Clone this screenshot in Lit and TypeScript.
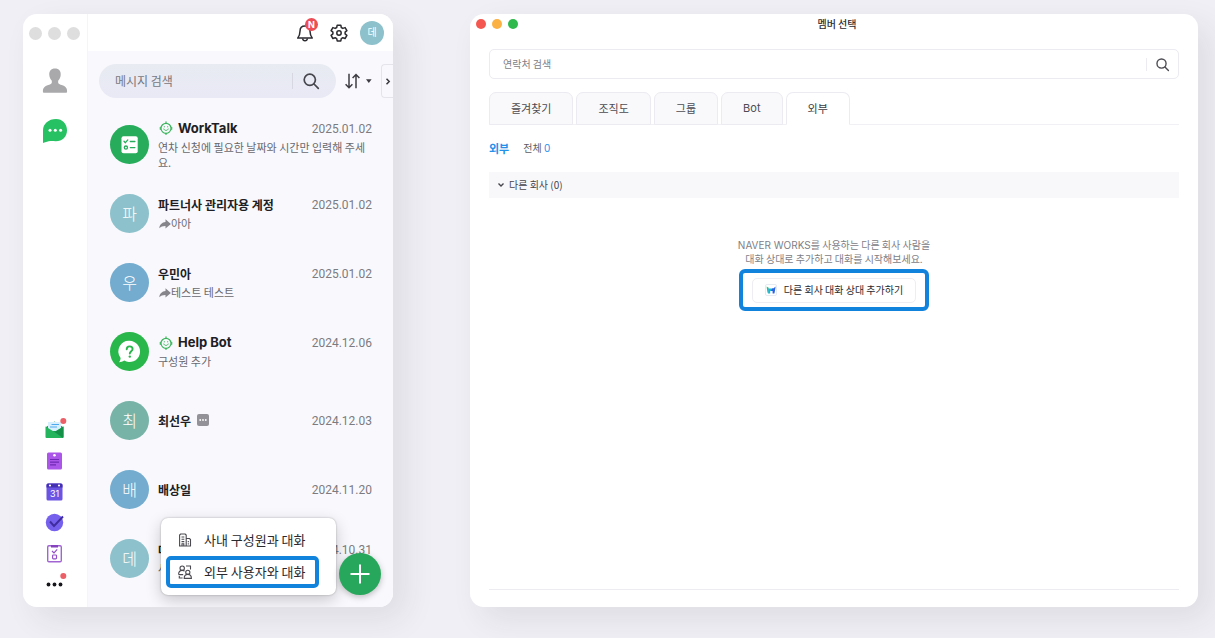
import { LitElement, html, css, svg, nothing } from "lit";
import { customElement, property } from "lit/decorators.js";
import { classMap } from "lit/directives/class-map.js";

const searchIcon = html`<svg viewBox="0 0 16 16" fill="none" stroke="currentColor" stroke-width="1.7" stroke-linecap="round" aria-hidden="true">
  <circle cx="6.8" cy="6.8" r="5.6" /><path d="M11 11 15.300 15.300" />
</svg>`;

const botIcon = html`<svg class="bot" viewBox="0 0 14 14" fill="none" stroke="#3bb55c" stroke-width="1.2" stroke-linecap="round" aria-hidden="true">
  <circle cx="7" cy="7.300" r="5" />
  <path d="M7 2.300V.8M1.300 6.300v2M12.700 6.300v2M7 12.300v1.200" />
  <path d="M4.800 8c.5 2 3.900 2 4.400 0M5.200 5.800h.3M8.500 5.800h.3" stroke-width="1" />
</svg>`;

const forwardIcon = html`<svg class="forward" viewBox="0 0 12 10" fill="#85858b" aria-hidden="true">
  <path d="M6.500.3 11.900 4.900 6.500 9.500V6.900C4 6.800 2 7.500.3 9.300.6 5.600 3 3.100 6.500 2.900Z" />
</svg>`;

const moreTag = html`<svg class="tag" viewBox="0 0 12 12" aria-hidden="true">
  <rect width="12" height="12" rx="2" fill="#929298" />
  <g fill="#fff"><circle cx="3.200" cy="6" r=".9" /><circle cx="6" cy="6" r=".9" /><circle cx="8.800" cy="6" r=".9" /></g>
</svg>`;

const checklistArt = svg`
  <rect x="11.500" y="11.200" width="16.200" height="17" rx="2" fill="#fff" />
  <g fill="none" stroke="#26ac5b" stroke-width="1.300" stroke-linecap="round" stroke-linejoin="round">
    <path d="M14 16.300l1.400 1.400 2.400-2.800M20.300 16.500h4.600M20.300 22.600h4.600" /><circle cx="15.900" cy="22.600" r="1.600" />
  </g>`;

const helpArt = svg`
  <path fill="#fff" d="M19.500 8.800a10.600 10.600 0 1 1-5.300 19.800c-1.600 1-3.300 1.600-5.300 1.600 1-1.200 1.600-2.500 1.700-4.300A10.600 10.600 0 0 1 19.500 8.800Z" />
  <path fill="none" stroke="#29b64a" stroke-width="1.900" stroke-linecap="round" d="M16.700 17.200c0-3.900 5.900-3.600 5.900-.3 0 2.300-2.800 2.300-2.800 4.700" />
  <circle cx="19.800" cy="24.600" r="1.200" fill="#29b64a" />`;

interface Talk {
  name: string;
  date: string;
  text?: string;
  initial?: string;
  tone: string;
  bot?: boolean;
  forwarded?: boolean;
  tagged?: boolean;
  art?: unknown;
}

const talks: Talk[] = [
  { name: "WorkTalk", date: "2025.01.02", text: "연차 신청에 필요한 날짜와 시간만 입력해 주세요.", tone: "green", bot: true, art: checklistArt },
  { name: "파트너사 관리자용 계정", date: "2025.01.02", text: "아아", initial: "파", tone: "aqua", forwarded: true },
  { name: "우민아", date: "2025.01.02", text: "테스트 테스트", initial: "우", tone: "blue", forwarded: true },
  { name: "Help Bot", date: "2024.12.06", text: "구성원 추가", tone: "bright", bot: true, art: helpArt },
  { name: "최선우", date: "2024.12.03", initial: "최", tone: "teal", tagged: true },
  { name: "배상일", date: "2024.11.20", initial: "배", tone: "blue" },
  { name: "데모", date: "2024.10.31", text: "사진", initial: "데", tone: "aqua" },
];

const apps = [
  { label: "메일", icon: svg`
    <path d="M1 7 9.500 1.500 18 7v9.500H1Z" fill="#1a9d50" /><path d="M3 2h13v9H3Z" fill="#d8effd" />
    <path d="M6.500 4.500H14M5 7h7" stroke="#4fa9ee" stroke-width="1.200" />
    <path d="M.5 6.500 9.500 12l9-5.500V17a1 1 0 0 1-1 1h-16a1 1 0 0 1-1-1Z" fill="#24b45d" /><path d="M18.500 6.500 9.500 12l8.500 6 .5-1Z" fill="#159049" />
    <circle cx="18.300" cy="1" r="3" fill="#ec5f67" />` },
  { label: "게시판", icon: svg`
    <rect x="2" y="1.500" width="15" height="17" rx="1.500" fill="#ab56e8" /><circle cx="9.500" cy="4.300" r="1.300" fill="#fff" />
    <path d="M5 8.500h9M5 11.200h9M5 13.900h6" stroke="#7029b4" stroke-width="1.200" />` },
  { label: "캘린더", icon: svg`
    <rect x="1.500" y="1.500" width="16" height="17" rx="1.500" fill="#6b54e3" /><path d="M1.500 3A1.500 1.500 0 0 1 3 1.500h13a1.500 1.500 0 0 1 1.500 1.500V5.500h-16Z" fill="#4430b2" />
    <circle cx="5" cy="3.500" r="1.100" fill="#fff" /><circle cx="14" cy="3.500" r="1.100" fill="#fff" />
    <text x="9.500" y="15" text-anchor="middle" font-size="9" font-family="Inter, sans-serif" fill="#fff">31</text>` },
  { label: "할 일", icon: svg`
    <circle cx="9.500" cy="9.500" r="8.700" fill="#7560ee" /><path d="M5 8.500 9 13l9-9.500" fill="none" stroke="#3f2c9e" stroke-width="1.900" />` },
  { label: "설문", icon: svg`
    <rect x="2.700" y="1.800" width="13.600" height="16" rx="1.200" fill="#fff" stroke="#a164d2" stroke-width="1.400" />
    <path d="M6 1h7v2.600H6Z" fill="#8543be" /><path d="m7 7 2 2 3.200-3.600" fill="none" stroke="#9350c8" stroke-width="1.200" />
    <rect x="7.600" y="11" width="3.900" height="3.900" rx=".8" fill="none" stroke="#9350c8" stroke-width="1.200" />` },
  { label: "더보기", icon: svg`
    <circle cx="3.500" cy="9.500" r="1.900" fill="#17171b" /><circle cx="9.500" cy="9.500" r="1.900" fill="#17171b" /><circle cx="15.500" cy="9.500" r="1.900" fill="#17171b" />
    <circle cx="18.300" cy="1" r="3" fill="#ec5f67" />` },
];

const base = css`
  :host { display: block; font-family: "Noto Sans CJK KR", sans-serif; }
  *, *::before, *::after { box-sizing: border-box; }
  button, input { font: inherit; color: inherit; border: 0; background: none; margin: 0; padding: 0; }
  button, a { cursor: pointer; }
  svg { display: block; overflow: visible; }
  .latin { font-family: Inter, "Noto Sans CJK KR", sans-serif; }
`;

@customElement("talk-row")
class TalkRow extends LitElement {
  @property({ attribute: false }) talk!: Talk;

  static styles = [base, css`
    .row { display: flex; align-items: center; gap: 9px; height: 69px; }
    .avatar { flex: none; display: grid; place-items: center; width: 39px; height: 39px; border-radius: 50%; color: #fff; font-size: 16px; font-weight: 300; line-height: 20px; }
    .letter { padding-bottom: 2px; }
    .avatar svg { width: 39px; height: 39px; }
    .green { background: #26ac5b; }
    .bright { background: #29b64a; }
    .aqua { background: #8dc1cb; }
    .blue { background: #74accf; }
    .teal { background: #78b3a7; }
    .body { flex: 1; min-width: 0; display: grid; gap: 2px; padding-bottom: 1px; }
    .head { display: flex; align-items: center; justify-content: space-between; }
    .name { display: flex; align-items: center; font-size: 12px; font-weight: 700; line-height: 19px; color: #202024; }
    .latin.name { font-size: 13px; }
    .bot { width: 14px; height: 14px; margin: 0 5px 0 1px; }
    .tag { width: 12px; height: 12px; margin-left: 6px; }
    .date { padding-top: 2px; font-family: Roboto, sans-serif; font-size: 12px; line-height: 17px; color: #7b7b81; }
    .text { display: flex; align-items: center; font-size: 11px; line-height: 15px; color: #68686e; word-break: break-all; }
    .forward { flex: none; width: 12px; height: 10px; margin-left: 1px; }
  `];

  render() {
    const t = this.talk;
    return html`<div class="row">
      <span class="avatar ${t.tone} ${t.art ? "" : "letter"}">${t.art ? html`<svg viewBox="0 0 39 39" aria-hidden="true">${t.art}</svg>` : t.initial}</span>
      <div class="body">
        <div class="head">
          <span class=${classMap({ name: true, latin: !!t.bot })}>${t.bot ? botIcon : nothing}${t.name}${t.tagged ? moreTag : nothing}</span>
          <time class="date">${t.date}</time>
        </div>
        ${t.text ? html`<div class="text">${t.forwarded ? forwardIcon : nothing}<span>${t.text}</span></div>` : nothing}
      </div>
    </div>`;
  }
}

@customElement("talk-window")
class TalkWindow extends LitElement {
  static styles = [base, css`
    :host { height: 100%; }
    .window { display: grid; grid-template-columns: 64px 1fr; height: 100%; border-radius: 14px; overflow: hidden; background: #fff; }
    .side { display: flex; flex-direction: column; align-items: center; padding: 13px 1px 13px 0; }
    .lights { display: flex; gap: 6px; }
    .lights span { width: 13px; height: 13px; border-radius: 50%; background: #dededf; }
    .side .main { width: 26px; height: 26px; margin-top: 24px; }
    .side .lights + .main { margin-top: 28px; }
    .apps { display: grid; gap: 12px; margin-top: auto; }
    .apps button, .apps svg { display: block; width: 19px; height: 19px; }
    .pane { position: relative; display: flex; flex-direction: column; background: #f9f9fd; border-left: 1px solid #f5f5f9; }
    .top { display: flex; align-items: center; justify-content: flex-end; gap: 12px; height: 37px; padding: 0 9px 0; background: #fff; }
    .icon { position: relative; display: block; width: 18px; height: 18px; color: #2b2b30; }
    .bell { margin-right: 4px; }
    .badge { position: absolute; top: -6px; right: -4px; width: 13px; height: 13px; border-radius: 50%; background: #ec4d56; color: #fff; font-size: 9px; font-weight: 700; line-height: 13px; text-align: center; }
    .me { display: grid; place-items: center; width: 24px; height: 24px; padding-bottom: 1px; border-radius: 50%; background: #8dc1cb; color: #fff; font-size: 10px; line-height: 14px; }
    .tools { display: flex; align-items: center; gap: 9px; padding: 13px 0 12px 11px; }
    .search { flex: 1; min-width: 0; display: flex; align-items: center; height: 34px; padding: 0 17px 0 16px; border-radius: 17px; background: linear-gradient(#e8ebf2, #e9e9f5); }
    .search input { flex: 1; min-width: 0; height: 20px; padding-bottom: 2px; font-size: 12px; outline: none; }
    .search input::placeholder { color: #77777e; opacity: 1; }
    .search button { border-left: 1px solid #d6d7e0; padding-left: 10px; color: #46464d; }
    .search svg { width: 16px; height: 16px; }
    .sort svg { width: 27px; height: 16px; }
    .fold { display: grid; place-items: center; width: 12px; height: 34px; border: 1px solid #e4e4ea; border-right: 0; border-radius: 4px 0 0 4px; }
    .fold svg { width: 4px; height: 7px; }
    .list { padding: 0 21px 13px 22px; }
    .menu { position: absolute; right: 57px; bottom: 12px; width: 175px; padding: 6px 17px 7px 5px; border-radius: 7px; background: #fff; box-shadow: 0 0 2px rgba(0,0,0,.3), 0 5px 16px rgba(0,0,0,.2); }
    .item { display: flex; align-items: center; gap: 12px; width: 100%; height: 32px; padding: 0 8px; border: 4px solid transparent; border-radius: 5px; color: #29292e; font-size: 13px; line-height: 20px; white-space: nowrap; }
    .item.marked { border-color: #1183dc; }
    .item svg { width: 14px; height: 14px; flex: none; }
    .add { position: absolute; right: 12px; bottom: 12px; display: grid; place-items: center; width: 42px; height: 42px; border-radius: 50%; background: #27a75b; box-shadow: 0 2px 6px rgba(0,0,0,.25); }
    .add svg { width: 20px; height: 20px; }
  `];

  render() {
    return html`<section class="window" aria-label="메시지">
      <nav class="side">
        <div class="lights"><span></span><span></span><span></span></div>
        <button class="main" aria-label="프로필"><svg viewBox="0 0 26 26" fill="#a9a9ac">
          <path d="M13 .6c4 0 6 2.600 5.700 6.300-.2 2.700-1.200 4.200-2.400 5.500-.6 2.800.3 3.500 3.400 4.600 4 1.400 5.300 2.900 5.400 6.300 0 1-.4 1.500-1.400 1.500H2.300c-1 0-1.400-.5-1.400-1.500.1-3.400 1.400-4.900 5.400-6.300 3.100-1.100 4-1.800 3.400-4.600-1.200-1.300-2.200-2.800-2.400-5.500C7 3.200 9 .6 13 .6Z" />
        </svg></button>
        <button class="main" aria-label="대화"><svg viewBox="0 0 26 26">
          <path fill="#25c163" d="M14 1c6.500 0 11 4.900 11 11.200 0 6.500-4.600 11-11.200 11-2 0-3.800-.2-5.500-.1-2.200.2-4.300.9-7.300 2V12.200C1 5.900 6.500 1 14 1Z" />
          <g fill="#fff"><circle cx="8" cy="12.300" r="1.500" /><circle cx="13.300" cy="12.300" r="1.500" /><circle cx="18.600" cy="12.300" r="1.500" /></g>
        </svg></button>
        <div class="apps">${apps.map((a) => html`<button aria-label=${a.label}><svg viewBox="0 0 19 19">${a.icon}</svg></button>`)}</div>
      </nav>
      <div class="pane">
        <header class="top">
          <button class="icon bell" aria-label="알림">
            <svg viewBox="0 0 18 18" fill="none" stroke="currentColor" stroke-width="1.500" stroke-linejoin="round">
              <path d="M9 2C5.800 2 4 4.200 4 7.200c0 3.300-.7 4.800-2.300 6.900h14.600C14.700 12 14 10.500 14 7.200 14 4.200 12.200 2 9 2Z" /><path d="M6.600 14.500c.4 3 4.400 3 4.800 0" />
            </svg><span class="badge latin">N</span>
          </button>
          <button class="icon" aria-label="설정">
            <svg viewBox="0 0 18 18" fill="none" stroke="currentColor" stroke-width="1.500" stroke-linejoin="round">
              <path d="M7.200 1.200h3.600l.5 2.300 1.500.9 2.300-.8 1.800 3.100-1.800 1.500v1.700l1.800 1.500-1.800 3.100-2.300-.8-1.500.9-.5 2.300H7.200l-.5-2.300-1.500-.9-2.300.8-1.800-3.100 1.800-1.500V8.200L1.100 6.700l1.800-3.100 2.300.8 1.500-.9Z" /><circle cx="9" cy="9" r="2.200" />
            </svg>
          </button>
          <button class="me" aria-label="내 계정">데</button>
        </header>
        <div class="tools">
          <div class="search"><input type="text" placeholder="메시지 검색" aria-label="메시지 검색" /><button aria-label="검색">${searchIcon}</button></div>
          <button class="sort" aria-label="정렬"><svg viewBox="0 0 27 16" fill="none" stroke="#3c3c42" stroke-width="1.500">
            <path d="M4 .8v13.700M.6 11.200 4 14.700l3.400-3.500M11 15.300V1.500M7.600 5 11 1.500 14.400 5" /><path d="M21 6.300h5.600L23.800 10Z" fill="#3c3c42" stroke="none" />
          </svg></button>
          <button class="fold" aria-label="펼치기"><svg viewBox="0 0 4 7" fill="none" stroke="#3c3c42" stroke-width="1.500"><path d="m.5.8 2.700 2.700L.5 6.200" /></svg></button>
        </div>
        <div class="list">${talks.map((t) => html`<talk-row .talk=${t}></talk-row>`)}</div>
        <div class="menu">
          <button class="item"><svg viewBox="0 0 14 14" fill="none" stroke="#4a4a50" stroke-width="1.100">
            <path d="M1.600 13V2L2.600 1h4.600l1 1v11M8.200 5.500h3.300l1 1V13H1M3.500 4h2.800M3.500 6.300h2.800M3.500 8.600h2.800M4 13v-2.300h1.800V13M10.300 8v1.300M10.300 10.300v1.300" />
          </svg>사내 구성원과 대화</button>
          <button class="item marked"><svg viewBox="0 0 14 14" fill="none" stroke="#4a4a50" stroke-width="1.100">
            <circle cx="4.200" cy="3.200" r="2.200" /><path d="M.6 9.600c0-2.800 1.300-4.200 3.600-4.200 1 0 1.800.3 2.400.8M.6 9.600h4.600M8 1h4.500v3.500M1.300 11v2h3.300" />
            <circle cx="9.800" cy="7.300" r="2.100" /><path d="M6.200 13.400c0-2.600 1.300-4 3.600-4s3.600 1.400 3.600 4Z" />
          </svg>외부 사용자와 대화</button>
        </div>
        <button class="add" aria-label="새 대화"><svg viewBox="0 0 20 20" stroke="#fff" stroke-width="2"><path d="M10 .5v19M.5 10h19" /></svg></button>
      </div>
    </section>`;
  }
}

@customElement("member-window")
class MemberWindow extends LitElement {
  static styles = [base, css`
    :host { height: 100%; }
    .window { display: flex; flex-direction: column; height: 100%; padding: 0 19px 17px; border-radius: 14px; background: #fff; font-size: 10px; line-height: 14px; }
    .title { display: grid; grid-template-columns: 1fr auto 1fr; align-items: center; height: 20px; margin: 0 -19px; padding-left: 6px; }
    .lights { display: flex; gap: 6px; }
    .lights span { width: 10px; height: 10px; border-radius: 50%; }
    .close { background: #f4574f; }
    .mini { background: #fbb144; }
    .full { background: #2fb84b; }
    h1 { margin: 0; font-size: 10px; font-weight: 500; line-height: 20px; color: #2c2c31; }
    .search { display: flex; align-items: center; height: 30px; margin-top: 15px; padding: 0 9px 0 13px; border: 1px solid #ebebf1; border-radius: 5px; }
    .search input { flex: 1; min-width: 0; height: 18px; padding-bottom: 2px; outline: none; }
    .search input::placeholder { color: #808086; opacity: 1; }
    .search button { border-left: 1px solid #ebebf1; padding-left: 9px; color: #4c4c52; }
    .search svg { width: 13px; height: 13px; }
    .tabs { display: flex; gap: 3px; margin-top: 13px; border-bottom: 1px solid #f0f0f5; }
    .tab { height: 33px; margin-bottom: -1px; padding: 0 21px 1px; border: 1px solid #ebebf1; border-radius: 7px 7px 0 0; background: #f9f9fc; color: #4c4c52; font-size: 11px; line-height: 16px; }
    .tab.on { background: #fff; border-bottom-color: #fff; color: #3c3c42; }
    .summary { display: flex; align-items: center; gap: 14px; height: 47px; padding-bottom: 1px; color: #5c5c62; }
    .summary strong { font-size: 11px; color: #2590ea; }
    .count { color: #2590ea; }
    .group { display: flex; align-items: center; gap: 5px; width: 100%; height: 26px; padding: 0 9px; background: #f8f8fb; color: #45454b; }
    .group svg { width: 6px; height: 4px; }
    .empty { flex: 1; display: flex; flex-direction: column; align-items: center; padding-top: 40px; border-bottom: 1px solid #ededf1; }
    .empty p { margin: 0; line-height: 14px; color: #808086; text-align: center; }
    .mark { margin-top: 3px; padding: 5px 9px 4px; border: 4px solid #1183dc; border-radius: 6px; }
    .invite { display: flex; align-items: center; gap: 7px; height: 25px; padding: 0 12px 1px; border: 1px solid #ededf2; border-radius: 5px; color: #2a2a2e; }
    .invite svg { width: 12px; height: 12px; }
  `];

  render() {
    const tabs = ["즐겨찾기", "조직도", "그룹", "Bot", "외부"];
    return html`<section class="window" aria-label="멤버 선택">
      <header class="title">
        <div class="lights"><span class="close"></span><span class="mini"></span><span class="full"></span></div>
        <h1>멤버 선택</h1>
      </header>
      <div class="search"><input type="text" placeholder="연락처 검색" aria-label="연락처 검색" /><button aria-label="검색">${searchIcon}</button></div>
      <div class="tabs" role="tablist">
        ${tabs.map((t) => html`<button role="tab" aria-selected=${t === "외부" ? "true" : "false"} class=${classMap({ tab: true, on: t === "외부", latin: t === "Bot" })}>${t}</button>`)}
      </div>
      <div class="summary"><strong>외부</strong><span>전체 <span class="count latin">0</span></span></div>
      <button class="group"><svg viewBox="0 0 6 4" fill="none" stroke="currentColor" stroke-width="1.400"><path d="m.5.6 2.500 2.400L5.500.6" /></svg><span>다른 회사 (0)</span></button>
      <div class="empty">
        <p><span class="latin">NAVER WORKS</span>를 사용하는 다른 회사 사람을<br />대화 상대로 추가하고 대화를 시작해보세요.</p>
        <div class="mark"><button class="invite"><svg viewBox="0 0 12 12">
          <rect x=".5" y=".5" width="11" height="11" rx="1.500" fill="#fff" stroke="#e6ebf2" />
          <path d="M1.600 2.600 3.600 3.800v5.600L2.500 8.600Z" fill="#27bf73" /><path d="M3.200 4.600H8v2.300H5.200v2.500H3.200Z" fill="#1fb6d6" /><path d="M7.200 4.600 8.600 4.300 10.600 2.400 10 6.600 9.400 9.400H7.600V6.900H6Z" fill="#2b62e4" />
        </svg>다른 회사 대화 상대 추가하기</button></div>
      </div>
    </section>`;
  }
}

@customElement("app-root")
class AppRoot extends LitElement {
  static styles = css`
    :host { display: block; }
    .desk { box-sizing: border-box; display: grid; grid-template-columns: 370px minmax(0, 1fr); gap: 77px; min-height: 100vh; padding: 14px 17px 31px 23px; background: #f0eff5; overflow: hidden; }
    .card { border-radius: 14px; box-shadow: 12px 12px 32px rgba(40, 40, 50, .09); }
  `;

  render() {
    return html`<main class="desk">
      <talk-window class="card"></talk-window>
      <member-window class="card"></member-window>
    </main>`;
  }
}
